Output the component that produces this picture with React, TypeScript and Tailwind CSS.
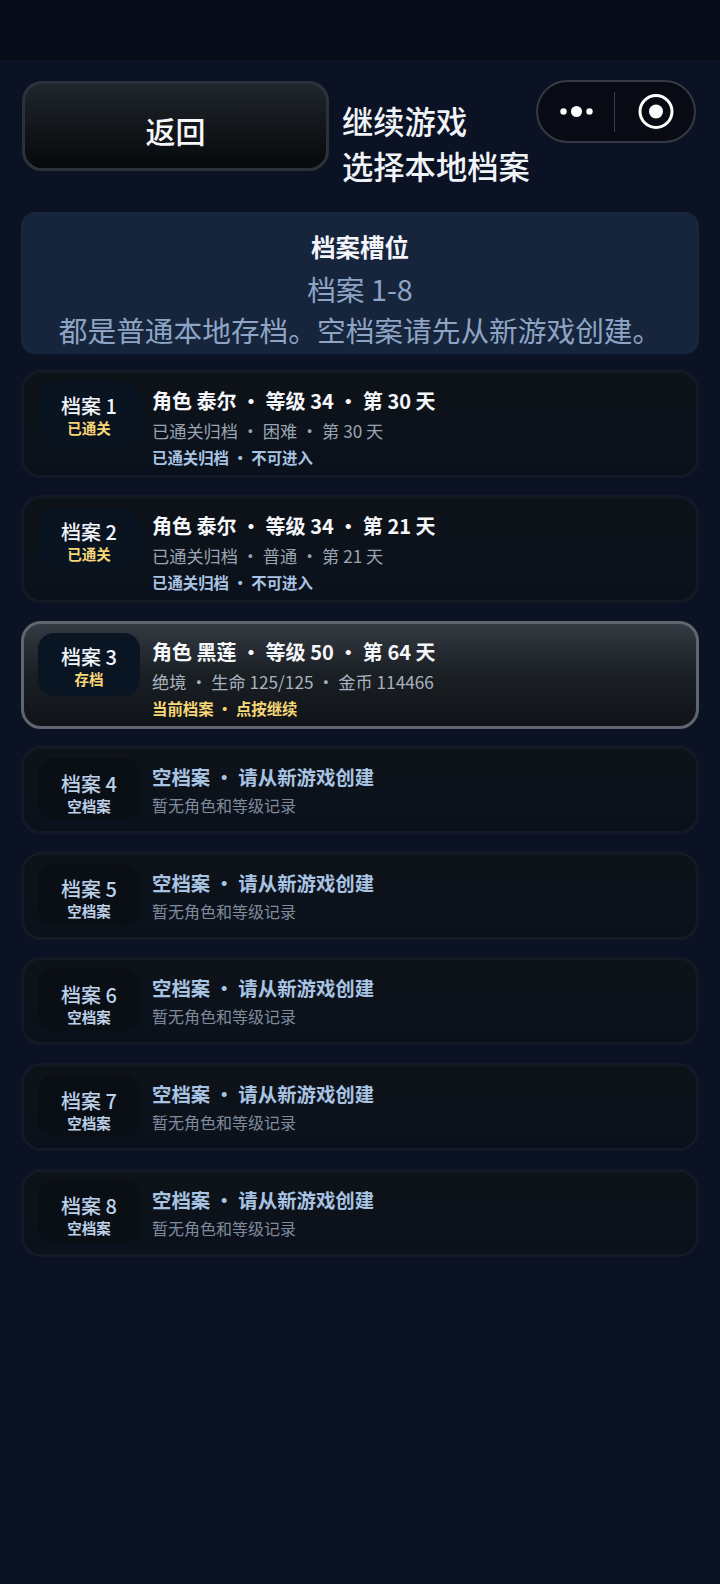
import React from "react";

const font = { fontFamily: '"Noto Sans CJK SC", "Noto Sans", sans-serif' };

type Slot = { n: number; tag: string; kind: "done" | "current" | "empty"; title: string; sub: string; note?: string };

const slots: Slot[] = [
  { n: 1, tag: "已通关", kind: "done", title: "角色 泰尔 ・ 等级 34 ・ 第 30 天", sub: "已通关归档 ・ 困难 ・ 第 30 天", note: "已通关归档 ・ 不可进入" },
  { n: 2, tag: "已通关", kind: "done", title: "角色 泰尔 ・ 等级 34 ・ 第 21 天", sub: "已通关归档 ・ 普通 ・ 第 21 天", note: "已通关归档 ・ 不可进入" },
  { n: 3, tag: "存档", kind: "current", title: "角色 黑莲 ・ 等级 50 ・ 第 64 天", sub: "绝境 ・ 生命 125/125 ・ 金币 114466", note: "当前档案 ・ 点按继续" },
  { n: 4, tag: "空档案", kind: "empty", title: "空档案 ・ 请从新游戏创建", sub: "暂无角色和等级记录" },
  { n: 5, tag: "空档案", kind: "empty", title: "空档案 ・ 请从新游戏创建", sub: "暂无角色和等级记录" },
  { n: 6, tag: "空档案", kind: "empty", title: "空档案 ・ 请从新游戏创建", sub: "暂无角色和等级记录" },
  { n: 7, tag: "空档案", kind: "empty", title: "空档案 ・ 请从新游戏创建", sub: "暂无角色和等级记录" },
  { n: 8, tag: "空档案", kind: "empty", title: "空档案 ・ 请从新游戏创建", sub: "暂无角色和等级记录" },
];

function Row({ s }: { s: Slot }) {
  const current = s.kind === "current";
  const empty = s.kind === "empty";
  return (
    <div
      className={
        current
          ? "flex items-start rounded-[20px] border-[3px] border-[#5f666f] bg-gradient-to-b from-[#333a41] via-[#1a1f24] to-[#101418] pl-[14px] pt-[9px] h-[108px]"
          : empty
            ? "flex items-start rounded-[20px] border-[3px] border-[#131925] bg-gradient-to-b from-[#0e1319] to-[#0b111c] pl-[14px] pt-[9px] h-[88px]"
            : "flex items-start rounded-[20px] border-[3px] border-[#131925] bg-gradient-to-b from-[#0e1319] to-[#0b111c] pl-[14px] pt-[9px] h-[108px]"
      }
    >
      <div
        className={
          "flex w-[102px] shrink-0 flex-col items-center justify-center rounded-[16px] " +
          (empty ? "h-[62px] bg-[#0a0e15] pt-[7px]" : current ? "h-[63px] bg-[#0a1524] pt-[4px]" : "h-[63px] bg-[#0a1320] pt-[4px]")
        }
      >
        <div className={"text-[20px] font-medium leading-[26px] " + (empty ? "text-[#bcd0e8]" : "text-[#f2f5f9]")}>档案 {s.n}</div>
        <div className={"text-[14.5px] font-bold leading-[18px] " + (empty ? "text-[#bcd0e8]" : "text-[#f7d777]")}>{s.tag}</div>
      </div>
      <div className="ml-[12px] mt-[4px] flex flex-col">
        <div className={"font-bold leading-[30px] " + (empty ? "text-[19.4px] text-[#a9c3e2]" : "text-[20px] text-[#f5f7fa]")}>{s.title}</div>
        <div className={empty ? "text-[16px] leading-[27px] text-[#7f8b9b]" : current ? "text-[17.2px] leading-[30px] text-[#a9b2be]" : "text-[17.2px] leading-[30px] text-[#9aa5b3]"}>{s.sub}</div>
        {s.note && (
          <div className={"text-[15.4px] font-bold leading-[22px] " + (current ? "text-[#f7d777]" : "text-[#a9c3e2]")}>{s.note}</div>
        )}
      </div>
    </div>
  );
}

export default function App() {
  return (
    <div className="flex min-h-[1584px] flex-col bg-[#0a1223]" style={font}>
      <div className="h-[60px] bg-[#060c18]" />
      <div className="flex flex-col px-[21px]">
        <div className="relative flex h-[152px] items-start pt-[21px]">
          <div className="ml-[1px] flex h-[90px] w-[307px] items-center justify-center rounded-[20px] border-[3px] border-[#2c323b] bg-gradient-to-b from-[#20262b] to-[#07090c] pt-[9px] text-[30px] font-medium text-[#f5f7fa]">
            返回
          </div>
          <div className="ml-[13px] mt-[17px] text-[31.3px] font-medium leading-[45px] text-[#f0f3f7]">
            <div>继续游戏</div>
            <div>选择本地档案</div>
          </div>
          <div className="absolute left-[515px] top-[20px] flex h-[63px] w-[160px] items-center rounded-full border-2 border-[#343a44] bg-[#080b13]">
            <svg width="76" height="59" viewBox="0 0 76 59" className="shrink-0">
              <circle cx="25.5" cy="29.5" r="3.2" fill="#fff" />
              <circle cx="38.5" cy="29.5" r="5.5" fill="#fff" />
              <circle cx="51.5" cy="29.5" r="3.2" fill="#fff" />
            </svg>
            <div className="h-[40px] w-[1px] shrink-0 bg-[#3a4049]" />
            <svg width="79" height="59" viewBox="0 0 79 59" className="shrink-0">
              <circle cx="41" cy="29.5" r="16" fill="none" stroke="#fff" strokeWidth="3" />
              <circle cx="41" cy="29.5" r="7" fill="#fff" />
            </svg>
          </div>
        </div>
        <div className="flex h-[142px] flex-col items-center overflow-hidden rounded-[14px] bg-[#16243c] pt-[15px]">
          <div className="text-[24.5px] font-bold leading-[40px] text-[#f2f5f9]">档案槽位</div>
          <div className="text-[28.7px] leading-[43px] text-[#8da4c4]">档案 1-8</div>
          <div className="whitespace-nowrap text-[28.7px] leading-[40px] text-[#8da4c4]">都是普通本地存档。空档案请先从新游戏创建。</div>
        </div>
        <div className="mt-[15.5px] flex flex-col gap-[17.6px]">
          {slots.map((s) => (
            <Row key={s.n} s={s} />
          ))}
        </div>
      </div>
    </div>
  );
}
